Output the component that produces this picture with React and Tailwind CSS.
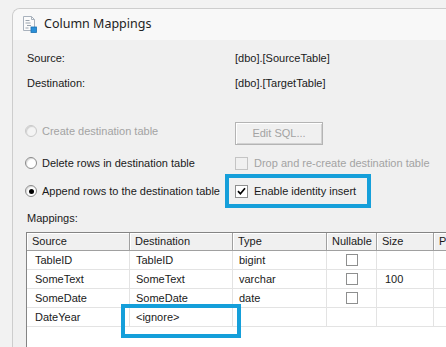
import React from 'react';

const FONT = "font-['Liberation_Sans',Arial,sans-serif]";

const DocIcon = () => (
    <svg width="15" height="17" viewBox="0 0 15 17">
        <path d="M1.5 0.5h8l3 3v11h-11z" fill="#fbfbfb" stroke="#a9b2bd" />
        <path d="M9.5 0.5v3h3" fill="none" stroke="#a9b2bd" />
        <path d="M3.5 4.5h4M3.5 7h5M5 9.5h4M3.5 12h3" stroke="#9aa3ad" strokeWidth="1" />
        <rect x="9" y="11" width="5.5" height="5.5" fill="#2a8fd8" stroke="#1c6fb0" strokeWidth="0.8" />
    </svg>
);

const Radio = ({ checked, disabled }) => (
    <span
        className={`relative inline-flex w-[12px] h-[12px] rounded-full border items-center justify-center ${
            disabled ? 'border-[#c9c9c9] bg-[#f4f4f4]' : 'border-[#8a8a8a] bg-white'
        } shadow-[inset_1px_1px_1px_rgba(0,0,0,0.15)]`}
    >
        {checked && <span className="w-[5px] h-[5px] rounded-full bg-black" />}
    </span>
);

const CheckBox = ({ checked, disabled, small }) => (
    <span
        className={`inline-flex items-center justify-center border ${
            small ? 'w-[12px] h-[12px]' : 'w-[13px] h-[13px]'
        } ${disabled ? 'border-[#c4c4c4] bg-[#f0f0f0]' : 'border-[#8e8f8f] bg-white'}`}
    >
        {checked && (
            <svg width="9" height="9" viewBox="0 0 9 9">
                <path d="M1 4.2l2.4 2.6L8 1.3" fill="none" stroke="#000" strokeWidth="1.7" />
            </svg>
        )}
    </span>
);

const cols = ['Source', 'Destination', 'Type', 'Nullable', 'Size', 'Precision'];

const rows = [
    { src: 'TableID', dst: 'TableID', type: 'bigint', nullable: true, size: '' },
    { src: 'SomeText', dst: 'SomeText', type: 'varchar', nullable: true, size: '100' },
    { src: 'SomeDate', dst: 'SomeDate', type: 'date', nullable: true, size: '' },
    { src: 'DateYear', dst: '<ignore>', type: '', nullable: false, size: '' },
];

const App = () => {
    return (
        <div className={`relative w-[446px] h-[347px] overflow-hidden bg-[#f2f2f2] pl-[12px] pt-[8px] text-[11px] text-[#1a1a1a] ${FONT}`}>
            {/* Window */}
            <div className="w-[600px] h-[400px] rounded-tl-[8px] border-l border-t border-[#cdcdcd] bg-[#f0f0f0] overflow-hidden">
                {/* Title bar */}
                <div className="h-[31px] bg-[#f8f8f8] flex items-center pl-[9px] gap-[7px]">
                    <DocIcon />
                    <span className="font-['Noto_Sans',sans-serif] text-[12.5px] text-[#222]">Column Mappings</span>
                </div>

                {/* Body */}
                <div className="pl-[12px] pt-[6px]">
                    <div className="flex h-[25px] items-center">
                        <span className="w-[210px] pl-[2px]">Source:</span>
                        <span>[dbo].[SourceTable]</span>
                    </div>
                    <div className="flex h-[25px] items-center">
                        <span className="w-[210px] pl-[2px]">Destination:</span>
                        <span>[dbo].[TargetTable]</span>
                    </div>

                    {/* Options */}
                    <div className="mt-[25px] flex h-[25px] items-center">
                        <div className="w-[210px] flex items-center gap-[5px] text-[#a3a3a3] mb-[5px]">
                            <Radio disabled />
                            <span>Create destination table</span>
                        </div>
                        <button className="w-[88px] h-[23px] border border-[#b4b4b4] bg-[#f0f0f0] text-[#a3a3a3] shadow-[inset_1px_1px_0_#fff,inset_-1px_-1px_0_#d2d2d2]">
                            Edit SQL...
                        </button>
                    </div>
                    <div className="mt-[7px] flex h-[20px] items-center">
                        <div className="w-[210px] flex items-center gap-[5px]">
                            <Radio />
                            <span>Delete rows in destination table</span>
                        </div>
                        <div className="flex items-center gap-[6px] text-[#a3a3a3]">
                            <CheckBox disabled />
                            <span>Drop and re-create destination table</span>
                        </div>
                    </div>
                    <div className="mt-[8px] flex h-[20px] items-center">
                        <div className="w-[210px] flex items-center gap-[5px]">
                            <Radio checked />
                            <span>Append rows to the destination table</span>
                        </div>
                        <div className="flex items-center gap-[6px]">
                            <CheckBox checked />
                            <span>Enable identity insert</span>
                        </div>
                    </div>

                    <div className="mt-[9px] h-[17px] flex items-center pl-[2px]">Mappings:</div>

                    {/* Grid */}
                    <div className="ml-[1px] mt-[5px] h-[140px] border-l border-t border-[#848484] bg-white">
                        <div className="grid grid-cols-[103px_103px_94px_50px_57px_60px]">
                            {cols.map((c) => (
                                <div
                                    key={c}
                                    className="h-[18px] flex items-center px-[5px] bg-[#f0f0f0] border-r border-b border-[#a0a0a0] shadow-[inset_1px_1px_0_#fff]"
                                >
                                    {c}
                                </div>
                            ))}
                            {rows.map((r) => (
                                <React.Fragment key={r.src}>
                                    <div className="h-[19px] flex items-center pl-[8px] border-r border-b border-[#e3e3e3]">{r.src}</div>
                                    <div className="h-[19px] flex items-center pl-[6px] border-r border-b border-[#e3e3e3]">{r.dst}</div>
                                    <div className="h-[19px] flex items-center pl-[6px] border-r border-b border-[#e3e3e3]">{r.type}</div>
                                    <div className="h-[19px] flex items-center justify-center border-r border-b border-[#e3e3e3]">
                                        {r.nullable && <CheckBox small />}
                                    </div>
                                    <div className="h-[19px] flex items-center pl-[8px] border-r border-b border-[#e3e3e3]">{r.size}</div>
                                    <div className="h-[19px] border-b border-[#e3e3e3]" />
                                </React.Fragment>
                            ))}
                        </div>
                    </div>
                </div>
            </div>

            {/* Highlight annotations */}
            <div className="absolute left-[225px] top-[174px] w-[146px] h-[34px] border-[4px] border-[#159fda]" />
            <div className="absolute left-[121px] top-[304px] w-[120px] h-[34px] border-[4px] border-[#159fda]" />
        </div>
    );
};

export default App;
